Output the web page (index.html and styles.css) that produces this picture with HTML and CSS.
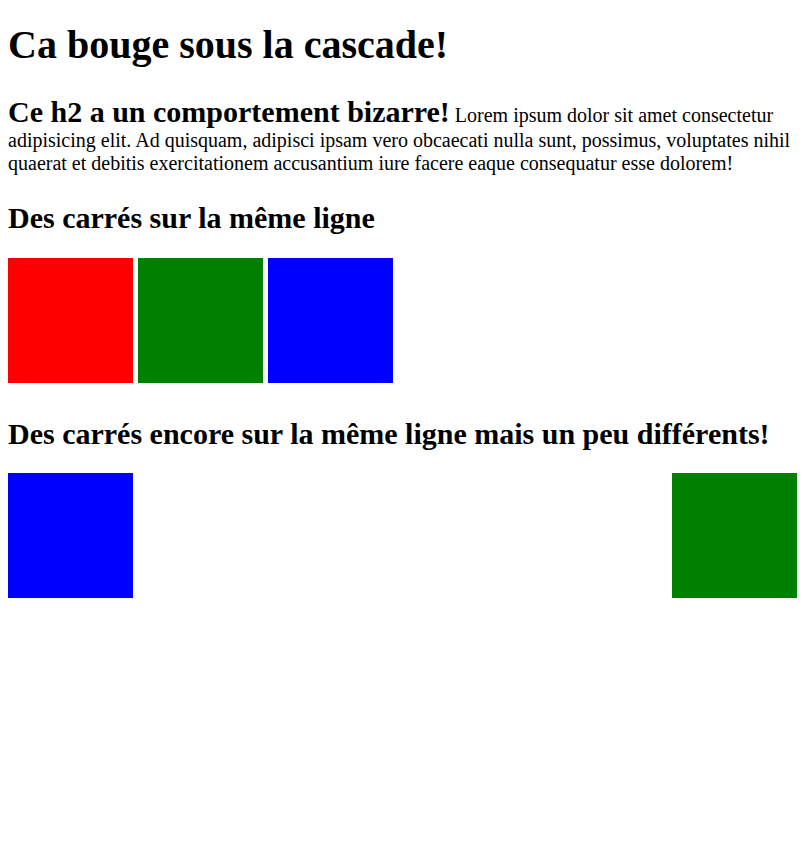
FILE: index.html
```html
<!DOCTYPE html>
<html lang="fr">
<head>
<meta charset="utf-8">
<title>Cascade</title>
<link rel="stylesheet" href="styles.css">
</head>
<body>
<h1>Ca bouge sous la cascade!</h1>
<div class="intro"><h2 class="inline-title">Ce h2 a un comportement bizarre!</h2> <p class="inline-text">Lorem ipsum dolor sit amet consectetur adipisicing elit. Ad quisquam, adipisci ipsam vero obcaecati nulla sunt, possimus, voluptates nihil quaerat et debitis exercitationem accusantium iure facere eaque consequatur esse dolorem!</p></div>
<h2 class="titre-ligne">Des carrés sur la même ligne</h2>
<div class="row">
<div class="carre rouge"></div>
<div class="carre vert"></div>
<div class="carre bleu"></div>
</div>
<h2>Des carrés encore sur la même ligne mais un peu différents!</h2>
<div class="row2">
<div class="carre bleu"></div>
<div class="carre vert"></div>
</div>
</body>
</html>
```

FILE: styles.css
```css
html {
  background: #fff;
}
body {
  margin: 8px 6px 8px 8px;
  font-family: "Liberation Serif", "Times New Roman", serif;
  font-size: 20px;
  color: #000;
}
h1 {
  font-size: 40px;
  margin: 13px 0 27px;
}
h2 {
  font-size: 30px;
  margin: 25px 0 22px;
}
.titre-ligne {
  margin-bottom: 23px;
}
.intro {
  font-size: 20px;
  margin: 0 0 26px;
}
.inline-title {
  display: inline;
  margin: 0;
}
.inline-text {
  display: inline;
  margin: 0;
}
.carre {
  width: 125px;
  height: 125px;
  flex: none;
}
.row {
  display: flex;
  gap: 5px;
  margin-bottom: 34px;
}
.row2 {
  display: flex;
  justify-content: space-between;
}
.rouge { background: #f00; }
.vert { background: #008000; }
.bleu { background: #00f; }
```
